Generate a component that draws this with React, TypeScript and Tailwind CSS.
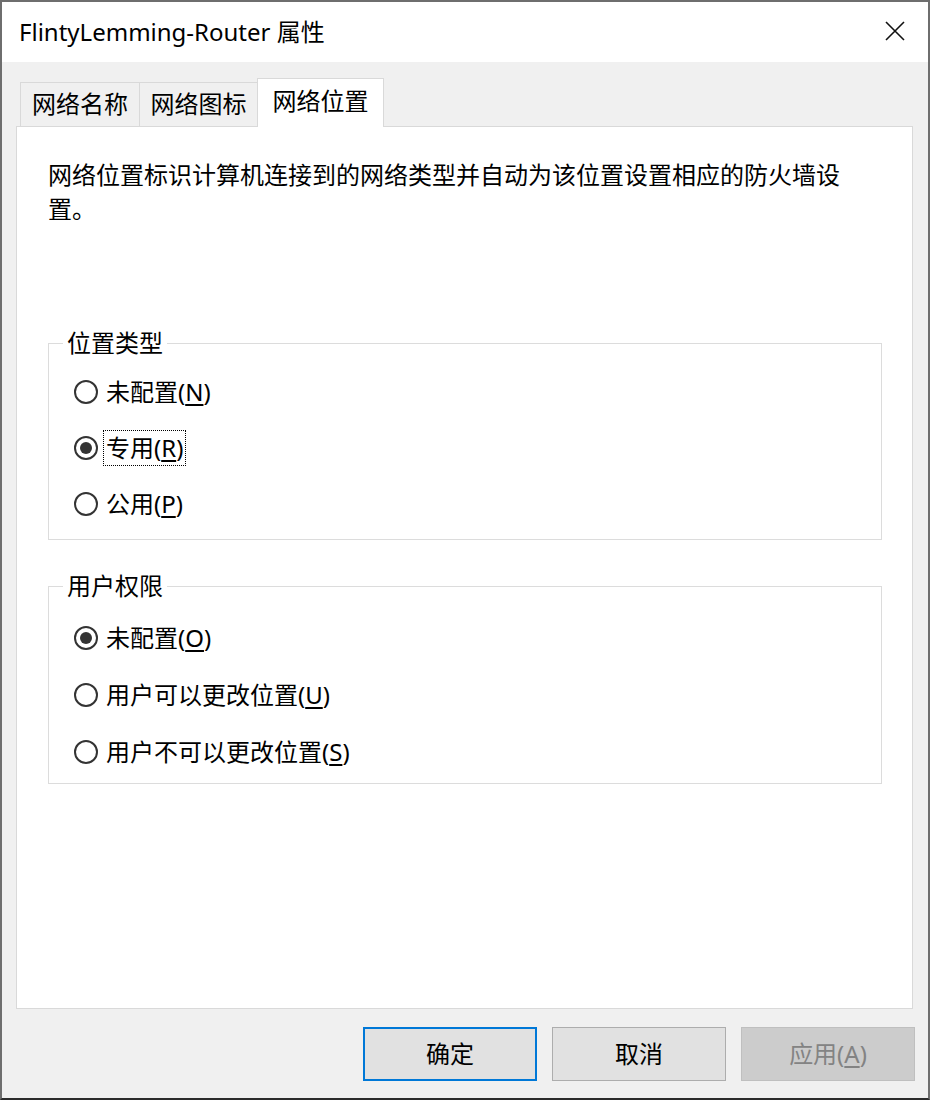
import { ReactNode } from 'react';

const FONT = { fontFamily: '"Noto Sans", "Noto Sans CJK SC", sans-serif' };

type Option = { label: string; key: string; checked?: boolean; focused?: boolean };

const locationOptions: Option[] = [
  { label: '未配置', key: 'N' },
  { label: '专用', key: 'R', checked: true, focused: true },
  { label: '公用', key: 'P' },
];

const permissionOptions: Option[] = [
  { label: '未配置', key: 'O', checked: true },
  { label: '用户可以更改位置', key: 'U' },
  { label: '用户不可以更改位置', key: 'S' },
];

function Radio({ option, tall }: { option: Option; tall?: boolean }) {
  return (
    <div className={`flex items-center ${tall ? 'h-[57px]' : 'h-[56px]'}`}>
      <span className="flex h-[24px] w-[24px] items-center justify-center rounded-full border-2 border-[#333333] bg-white">
        {option.checked && <span className="h-[12px] w-[12px] rounded-full bg-[#333333]" />}
      </span>
      <span
        className={`ml-[5px] border px-[2px] leading-[34px] ${
          option.focused ? 'border-dotted border-black' : 'border-transparent'
        }`}
      >
        {option.label}(<span className="underline underline-offset-[3px]">{option.key}</span>)
      </span>
    </div>
  );
}

function GroupBox({
  title,
  className,
  children,
}: {
  title: string;
  className: string;
  children: ReactNode;
}) {
  return (
    <fieldset className={`border border-[#dcdcdc] ${className}`}>
      <legend className="ml-[14px] px-[4px] leading-[34px]">{title}</legend>
      <div className="pl-[25px]">{children}</div>
    </fieldset>
  );
}

export default function App() {
  return (
    <div
      className="flex h-[1100px] w-[930px] flex-col border-2 border-[#6e6e6e] border-b-[#2b2b2b] bg-[#f0f0f0] text-[24px] text-black"
      style={FONT}
    >
      <header className="flex h-[60px] shrink-0 items-center justify-between bg-white pl-[17px] pr-[23px]">
        <span className="-mt-[1px] leading-none">FlintyLemming-Router 属性</span>
        <svg width="20" height="20" viewBox="0 0 20 20" className="-mt-[2px]">
          <path d="M1 1 L19 19 M19 1 L1 19" stroke="#111111" strokeWidth="1.6" />
        </svg>
      </header>

      <div className="flex flex-1 flex-col pl-[14px] pt-[16px]">
        <div className="relative z-10 -mb-px flex h-[49px] items-end pl-[4px]">
          <div className="flex h-[45px] w-[120px] items-center justify-center border border-b-0 border-[#d9d9d9] pb-[2px]">
            网络名称
          </div>
          <div className="flex h-[45px] w-[118px] items-center justify-center border-t border-r border-[#d9d9d9] pb-[2px]">
            网络图标
          </div>
          <div className="-ml-px flex h-[49px] w-[127px] items-center justify-center border border-b-0 border-[#d9d9d9] bg-white pb-[4px]">
            网络位置
          </div>
        </div>

        <section className="flex h-[883px] w-[897px] flex-col border border-[#d9d9d9] bg-white px-[31px] pt-[31px]">
          <p className="leading-[34px]">
            网络位置标识计算机连接到的网络类型并自动为该位置设置相应的防火墙设置。
          </p>

          <div className="mt-[100px] flex w-[834px] flex-col gap-[29px]">
            <GroupBox title="位置类型" className="pt-[4px] pb-[7px]">
              {locationOptions.map((o) => (
                <Radio key={o.key} option={o} />
              ))}
            </GroupBox>
            <GroupBox title="用户权限" className="pt-[6px] pb-[3px]">
              {permissionOptions.map((o) => (
                <Radio key={o.key} option={o} tall />
              ))}
            </GroupBox>
          </div>
        </section>

        <div className="flex w-[899px] justify-end gap-[15px] pt-[18px]">
          <button className="h-[54px] w-[174px] border-2 border-[#0078d7] bg-[#e1e1e1]">确定</button>
          <button className="h-[54px] w-[174px] border border-[#adadad] bg-[#e1e1e1]">取消</button>
          <button className="h-[54px] w-[174px] border border-[#bfbfbf] bg-[#cccccc] text-[#838383]">
            应用(<span className="underline underline-offset-[3px]">A</span>)
          </button>
        </div>
      </div>
    </div>
  );
}
